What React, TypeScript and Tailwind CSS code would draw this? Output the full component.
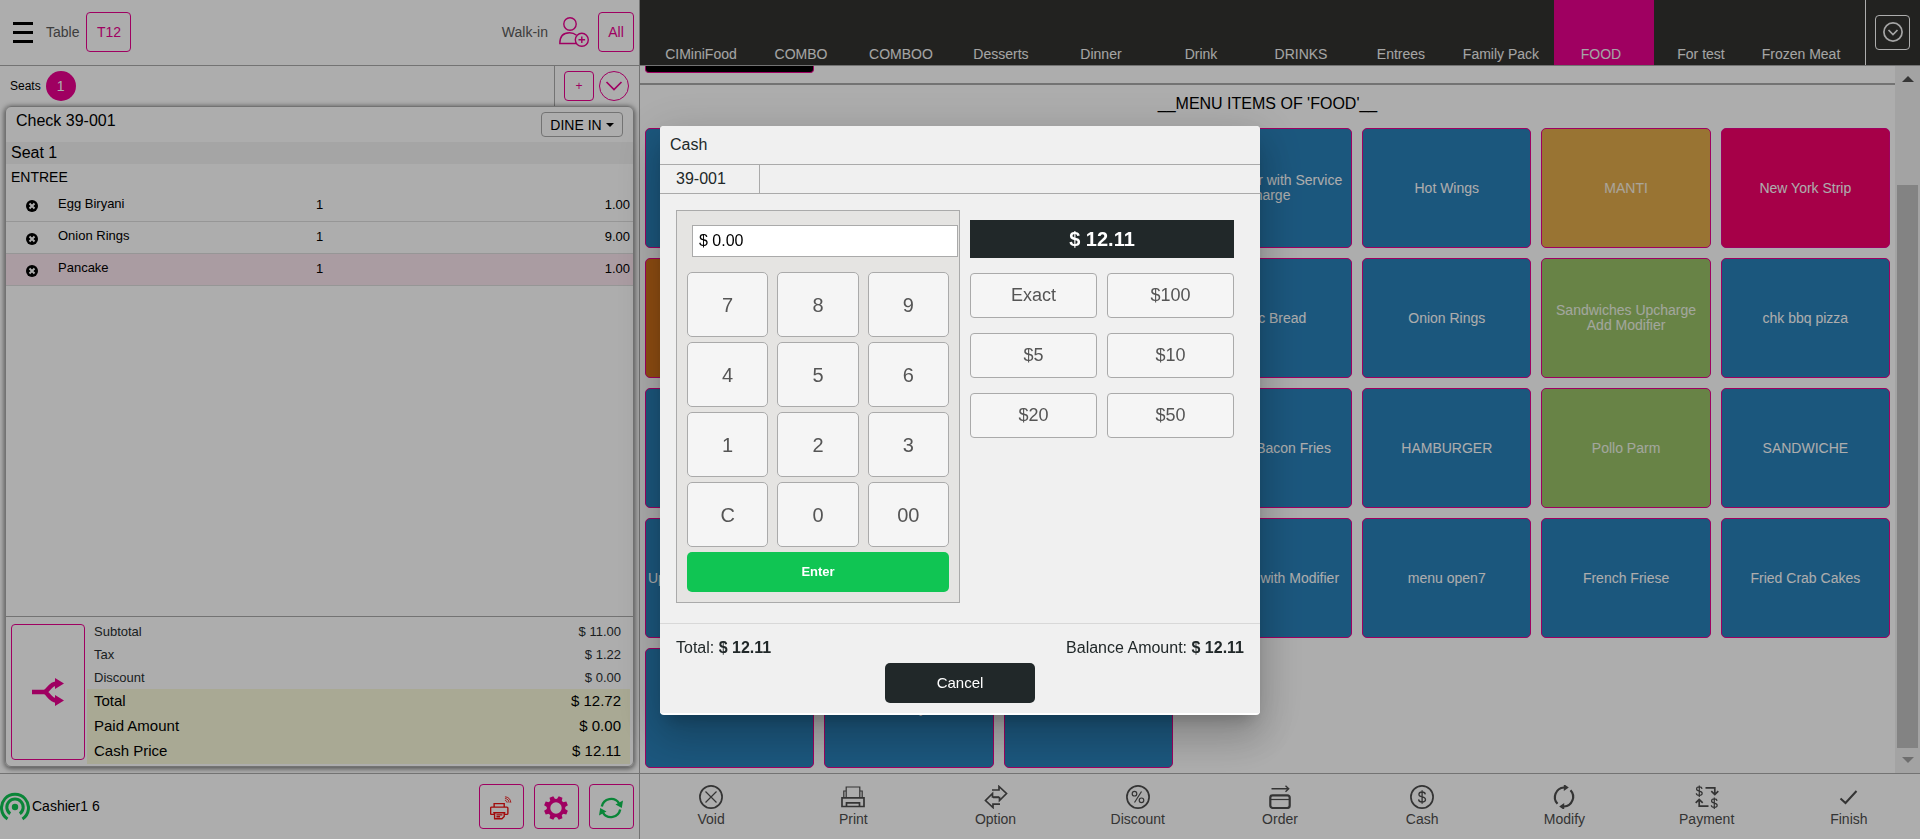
import React from 'react';

type Tile = { label: string; tone: keyof typeof tones };

const tones = {
  blue: 'bg-[#2980b9] text-white',
  amber: 'bg-[#e2ac4c] text-white/85',
  crimson: 'bg-[#f5006a] text-white',
  green: 'bg-[#9ac168] text-white/85',
  orange: 'bg-[#d3721a] text-white',
};

const categories = [
  'CIMiniFood', 'COMBO', 'COMBOO', 'Desserts', 'Dinner', 'Drink',
  'DRINKS', 'Entrees', 'Family Pack', 'FOOD', 'For test', 'Frozen Meat',
];

const tiles: Tile[] = [
  { label: '', tone: 'blue' },
  { label: '', tone: 'blue' },
  { label: '', tone: 'blue' },
  { label: 'Hamburger with Service Charge', tone: 'blue' },
  { label: 'Hot Wings', tone: 'blue' },
  { label: 'MANTI', tone: 'amber' },
  { label: 'New York Strip', tone: 'crimson' },
  { label: '', tone: 'orange' },
  { label: '', tone: 'blue' },
  { label: '', tone: 'blue' },
  { label: 'Garlic Bread', tone: 'blue' },
  { label: 'Onion Rings', tone: 'blue' },
  { label: 'Sandwiches Upcharge Add Modifier', tone: 'green' },
  { label: 'chk bbq pizza', tone: 'blue' },
  { label: '', tone: 'blue' },
  { label: '', tone: 'blue' },
  { label: '', tone: 'blue' },
  { label: 'Cheese Bacon Fries', tone: 'blue' },
  { label: 'HAMBURGER', tone: 'blue' },
  { label: 'Pollo Parm', tone: 'green' },
  { label: 'SANDWICHE', tone: 'blue' },
  { label: 'Upcharge Modifier Combo', tone: 'blue' },
  { label: '', tone: 'blue' },
  { label: '', tone: 'blue' },
  { label: 'Sandwich with Modifier', tone: 'blue' },
  { label: 'menu open7', tone: 'blue' },
  { label: 'French Friese', tone: 'blue' },
  { label: 'Fried Crab Cakes', tone: 'blue' },
  { label: '', tone: 'blue' },
  { label: 'Curry', tone: 'blue' },
  { label: '', tone: 'blue' },
];

const orderLines = [
  { name: 'Egg Biryani', qty: '1', price: '1.00', active: false },
  { name: 'Onion Rings', qty: '1', price: '9.00', active: false },
  { name: 'Pancake', qty: '1', price: '1.00', active: true },
];

const minorTotals = [
  ['Subtotal', '$ 11.00'],
  ['Tax', '$ 1.22'],
  ['Discount', '$ 0.00'],
];

const majorTotals = [
  ['Total', '$ 12.72'],
  ['Paid Amount', '$ 0.00'],
  ['Cash Price', '$ 12.11'],
];

const keypad = ['7', '8', '9', '4', '5', '6', '1', '2', '3', 'C', '0', '00'];
const quickCash = ['Exact', '$100', '$5', '$10', '$20', '$50'];

const stroke = { fill: 'none', stroke: 'currentColor', strokeWidth: 1.7 } as const;

function CustomerAddIcon() {
  return (
    <svg width="30" height="30" viewBox="0 0 30 30" {...stroke} strokeWidth={1.4} aria-hidden>
      <circle cx="11" cy="7" r="6.2" />
      <path d="M17 26.500H.8C.8 19.500 4.500 15.800 10.500 15.800c3 0 5.200.9 7 2.400" />
      <circle cx="22.800" cy="22.800" r="6.500" />
      <path d="M22.800 19.500v6.600M19.500 22.800h6.600" />
    </svg>
  );
}

function SplitIcon() {
  return (
    <svg width="32" height="28" viewBox="0 0 32 28" aria-hidden>
      <path d="M0 14h12c4.500 0 5-8.500 13-8.500M12 14c4.500 0 5 8.500 13 8.500" fill="none" stroke="currentColor" strokeWidth="4.500" />
      <path d="M23 0 32 5.500 23 11zM23 17 32 22.500 23 28z" fill="currentColor" />
    </svg>
  );
}

function SignalIcon() {
  return (
    <svg width="30" height="30" viewBox="0 0 30 30" fill="none" stroke="currentColor" strokeWidth="3" aria-hidden>
      <path d="M7.500 28a13.500 13.500 0 1 1 15 0" />
      <path d="M10.200 22.800a8.200 8.200 0 1 1 9.600 0" />
      <circle cx="15" cy="16" r="3.200" fill="currentColor" stroke="none" />
    </svg>
  );
}

function WirelessPrinterIcon() {
  return (
    <svg width="22" height="24" viewBox="0 0 24 26" fill="none" stroke="currentColor" strokeWidth="1.500" aria-hidden>
      <path d="M4.500 12V8.200h11V12M4.500 20H1.800c-.7 0-1.100-.4-1.100-1.100v-5.800c0-.7.400-1.100 1.100-1.100h16.600c.7 0 1.100.4 1.100 1.100v5.800c0 .7-.4 1.100-1.100 1.100h-2.900" />
      <path d="M3.500 18.200h13.200M5 18.200v6.500h8l2.500-2.500v-4M7 20.500h6.500M7 22.500h4" />
      <path d="M16.300 4.800c1.400.1 2.300 1 2.400 2.400M16.300 2.700c2.600.1 4.400 1.900 4.500 4.500M16.300.8c3.700.1 6.300 2.700 6.400 6.400" strokeWidth="1" />
    </svg>
  );
}

function GearIcon() {
  return (
    <svg width="24" height="24" viewBox="0 0 24 24" aria-hidden>
      <circle cx="12" cy="12" r="7.500" fill="none" stroke="currentColor" strokeWidth="3.600" />
      {[22.5, 67.5, 112.5, 157.5, 202.5, 247.5, 292.5, 337.5].map((angle) => (
        <path key={angle} d="M9.200 4.500 10 0h4l.8 4.500z" fill="currentColor" transform={`rotate(${angle} 12 12)`} />
      ))}
    </svg>
  );
}

function RefreshIcon() {
  return (
    <svg width="24" height="24" viewBox="0 0 24 24" aria-hidden>
      <path d="M2.800 10.500A9.500 9.500 0 0 1 20 7.200M21.200 13.500A9.500 9.500 0 0 1 4 16.800" fill="none" stroke="currentColor" strokeWidth="2.400" />
      <path d="M24 4.500 22.800 12 16.500 8.500zM0 19.500 1.200 12 7.500 15.500z" fill="currentColor" />
    </svg>
  );
}

function Svg24({ children }: { children: React.ReactNode }) {
  return (
    <svg width="24" height="24" viewBox="0 0 24 24" {...stroke} aria-hidden>
      {children}
    </svg>
  );
}

const dollar = 'M15.300 9.300c-.2-1.500-1.400-2.300-3.200-2.300-1.900 0-3.200.9-3.200 2.400 0 3.400 6.600 1.600 6.600 5.100 0 1.600-1.400 2.500-3.400 2.500s-3.400-.9-3.500-2.600M12.100 5.200v13.600';

const actions: { label: string; icon: React.ReactNode }[] = [
  {
    label: 'Void',
    icon: <Svg24><circle cx="12" cy="12" r="11.100" /><path d="m6.500 6.500 11 11m0-11-11 11" strokeWidth="1.200" /></Svg24>,
  },
  {
    label: 'Print',
    icon: (
      <Svg24>
        <path d="M5.200 12.500V2h13.600v10.500" strokeWidth="1.200" />
        <path d="M5 6H2.800v6.500M19 6h2.200v6.500" strokeWidth="1.200" />
        <path d="M1 12.800h22v8.700H1zM5.500 21v-3.200h13V21" />
      </Svg24>
    ),
  },
  {
    label: 'Option',
    icon: (
      <Svg24>
        <path d="M8 5h7V1.500L22.500 8.500 15.500 15.500V12.500H9" />
        <path d="M16 19.200H9v3.300L1.500 15.500 8.500 8.500v3.500h6.500" />
      </Svg24>
    ),
  },
  {
    label: 'Discount',
    icon: (
      <Svg24>
        <circle cx="12" cy="12" r="11.100" />
        <g strokeWidth="1.200"><circle cx="8.500" cy="8.700" r="2.300" /><circle cx="15.500" cy="15.300" r="2.300" /><path d="m15.500 6.500-7 11" /></g>
      </Svg24>
    ),
  },
  {
    label: 'Order',
    icon: (
      <Svg24>
        <path d="M3.500 3.800h17M17.500.8l3.200 3-3.200 3" strokeWidth="1.400" />
        <rect x="2.300" y="10.300" width="19.400" height="12.700" rx="2.500" strokeWidth="2.200" />
        <path d="M2.500 14.500h19" strokeWidth="1.200" />
      </Svg24>
    ),
  },
  {
    label: 'Cash',
    icon: <Svg24><circle cx="12" cy="12" r="11.100" /><path d={dollar} strokeWidth="1.300" /></Svg24>,
  },
  {
    label: 'Modify',
    icon: (
      <Svg24>
        <path d="M5.500 18.800A9.700 9.700 0 0 1 12 2.500h1M18.500 5.200A9.700 9.700 0 0 1 12 21.500h-1" strokeWidth="2.200" />
        <path d="M11.800-1v7l5-3.500zM12.200 18v7l-5-3.500z" fill="currentColor" stroke="none" />
      </Svg24>
    ),
  },
  {
    label: 'Payment',
    icon: (
      <Svg24>
        <path d="M10.500 2.800h9.300v6.500M16.300 6.200l3.500 3.300 3.500-3.300M13.500 21.200H4.200v-6.500M.7 17.800l3.500-3.300 3.500 3.300" />
        <g strokeWidth="1.400">
          <path d={dollar} transform="translate(-6 -4) scale(.85)" />
          <path d={dollar} transform="translate(9 8) scale(.85)" />
        </g>
      </Svg24>
    ),
  },
  { label: 'Finish', icon: <Svg24><path d="m3.500 13.500 5 4.500L19.500 6" strokeWidth="2" /></Svg24> },
];

const outlineButton = 'flex items-center justify-center rounded border border-[#eb0090] text-[#eb0090]';

function OrderPanel() {
  return (
    <section className="flex w-1/3 flex-col border-r border-[#aaa]">
      <header className="flex h-[66px] shrink-0 items-center border-b border-[#aaa] pb-px pl-[13px] pr-[5px] text-sm text-[#5a5a5a]">
        <button aria-label="Menu" className="mr-[13px] flex w-5 flex-col gap-[6px]">
          <span className="h-[3px] w-full bg-black" />
          <span className="h-[3px] w-full bg-black" />
          <span className="h-[3px] w-full bg-black" />
        </button>
        <span>Table</span>
        <button className={`${outlineButton} ml-[7px] h-10 w-[45px]`}>T12</button>
        <span className="ml-auto">Walk-in</span>
        <button aria-label="Add customer" className="ml-[11px] text-[#eb0090]"><CustomerAddIcon /></button>
        <button className={`${outlineButton} ml-[9px] h-10 w-9`}>All</button>
      </header>

      <div className="flex h-10 shrink-0 items-center pl-[10px] text-xs">
        <span>Seats</span>
        <button className="ml-[5px] flex size-[30px] items-center justify-center rounded-full bg-[#eb0090] text-sm text-white">1</button>
        <div className="ml-auto flex h-full items-center gap-[5px] border-l border-[#aaa] pl-[9px] pr-[10px]">
          <button aria-label="Add seat" className={`${outlineButton} size-[30px]`}>+</button>
          <button aria-label="Show seats" className="flex size-[30px] items-center justify-center rounded-full border border-[#eb0090] text-[#eb0090]">
            <svg width="18" height="10" viewBox="0 0 18 10" {...stroke} aria-hidden><path d="m1.500 1 7.500 7.500L16.500 1" /></svg>
          </button>
        </div>
      </div>

      <div className="mx-[5px] mb-[6px] flex min-h-0 flex-1 flex-col overflow-hidden rounded-md border border-[#aaa] shadow-[0_1px_5px_1px_rgba(0,0,0,0.5)]">
        <div className="flex h-[35px] shrink-0 items-start justify-between pl-[10px] pr-[10px] pt-[5px]">
          <h1 className="text-base leading-[18px]">Check 39-001</h1>
          <button className="flex h-[25px] w-[82px] items-center justify-center gap-1 rounded border border-[#aaa] text-sm">
            DINE IN
            <svg width="8" height="4" viewBox="0 0 8 4" aria-hidden><path d="M0 0h8L4 4z" /></svg>
          </button>
        </div>
        <div className="h-[22px] shrink-0 bg-[#f3f3f3] pl-[5px] text-base leading-[21px]">Seat 1</div>
        <div className="h-[25px] shrink-0 pl-[5px] text-sm leading-[26px]">ENTREE</div>
        <table className="w-full table-fixed text-[13px]">
          <tbody>
            {orderLines.map((line) => (
              <tr key={line.name} className={line.active ? 'h-8 border-b border-[#ddd] bg-[#fbe6ef]' : 'h-8 border-b border-[#ddd]'}>
                <td className="w-[52px] pl-5 pt-[3px]">
                  <button aria-label={`Remove ${line.name}`} className="block">
                    <svg width="12" height="12" viewBox="0 0 12 12" aria-hidden>
                      <circle cx="6" cy="6" r="6" />
                      <path d="m3.500 3.500 5 5m0-5-5 5" stroke="white" strokeWidth="2" />
                    </svg>
                  </button>
                </td>
                <td className="pb-[3px]">{line.name}</td>
                <td className="w-[200px] pb-px">{line.qty}</td>
                <td className="w-[117px] pb-px pr-[3px] text-right">{line.price}</td>
              </tr>
            ))}
          </tbody>
        </table>

        <div className="mt-auto flex gap-[2px] border-t border-[#aaa] pb-[2px] pl-[5px] pr-[3px]">
          <button aria-label="Split check" className={`${outlineButton} mb-1 mt-[7px] w-[74px]`}><SplitIcon /></button>
          <dl className="flex-1 pt-[3px]">
            {minorTotals.map(([label, value]) => (
              <div key={label} className="flex h-[23px] items-center justify-between pl-[7px] pr-[9px] text-[13px] text-[#2a2f31]">
                <dt>{label}</dt>
                <dd>{value}</dd>
              </div>
            ))}
            {majorTotals.map(([label, value]) => (
              <div key={label} className="flex h-[25px] items-center justify-between bg-[#f9fada] pl-[7px] pr-[9px] text-[15px]">
                <dt>{label}</dt>
                <dd>{value}</dd>
              </div>
            ))}
          </dl>
        </div>
      </div>

      <footer className="flex h-[66px] shrink-0 items-center border-t border-[#aaa] pb-px pr-[5px] text-sm">
        <span className="text-[#10c553]"><SignalIcon /></span>
        <span className="ml-[2px]">Cashier1 6</span>
        <div className="ml-auto flex gap-[10px]">
          <button aria-label="Printer status" className="flex size-[45px] items-center justify-center rounded border border-[#eb0090] pt-[3px] text-[#ee1111]"><WirelessPrinterIcon /></button>
          <button aria-label="Settings" className={`${outlineButton} size-[45px] pt-[3px]`}><GearIcon /></button>
          <button aria-label="Refresh" className="flex size-[45px] items-center justify-center rounded border border-[#eb0090] pt-[3px] text-[#10c553]"><RefreshIcon /></button>
        </div>
      </footer>
    </section>
  );
}

function MenuPanel() {
  return (
    <section className="flex min-w-0 flex-1 flex-col">
      <header className="flex h-[66px] shrink-0 border-b border-[#aaa] bg-[#333330] text-sm text-[#f3f3f3]">
        <nav className="flex min-w-0 flex-1 overflow-hidden pl-[14px]">
          {categories.map((category) => (
            <a
              key={category}
              href="#menu"
              className={
                category === 'FOOD'
                  ? 'flex w-[100px] shrink-0 items-end justify-center bg-[#eb0090] pb-[1px] pr-[6px]'
                  : 'flex w-[100px] shrink-0 items-end justify-center pb-[1px] pr-[6px]'
              }
            >
              {category}
            </a>
          ))}
        </nav>
        <div className="flex items-center border-l border-white pb-px pl-[9px] pr-[10px]">
          <button aria-label="More categories" className="flex size-[35px] items-center justify-center rounded border border-white">
            <svg width="20" height="20" viewBox="0 0 20 20" {...stroke} aria-hidden>
              <circle cx="10" cy="10" r="9.100" />
              <path d="m5.500 8 4.500 4.500L14.500 8" />
            </svg>
          </button>
        </div>
      </header>

      <div className="flex min-h-0 flex-1">
        <div id="menu" className="min-w-0 flex-1 overflow-hidden">
          <div className="mb-[10px] grid grid-cols-7 gap-x-[10px] px-[5px]">
            <div className="h-[7px] rounded-b border border-t-0 border-[#eb0090] bg-black" />
          </div>
          <h2 className="flex h-[45px] items-center justify-center border-t-2 border-[#aaa] pb-[6px] text-base">__MENU ITEMS OF 'FOOD'__</h2>
          <div className="grid auto-rows-[120px] grid-cols-7 gap-[10px] px-[5px]">
            {tiles.map((tile, index) => (
              <button
                key={index}
                className={`flex items-center justify-center rounded-[5px] border border-[#eb0090] px-px text-sm leading-[15px] ${tones[tile.tone]}`}
              >
                {tile.label}
              </button>
            ))}
          </div>
        </div>
        <div className="flex w-[25px] flex-col items-center bg-[#f1f1f1]" aria-hidden>
          <svg className="mt-[10px]" width="12" height="6" viewBox="0 0 12 6"><path d="M0 6h12L6 0z" fill="#505050" /></svg>
          <div className="mb-[9px] mt-[103px] w-[21px] flex-1 bg-[#c1c1c1]" />
          <svg className="mb-[10px]" width="12" height="6" viewBox="0 0 12 6"><path d="M0 0h12L6 6z" fill="#a3a3a3" /></svg>
        </div>
      </div>

      <footer className="grid h-[66px] shrink-0 grid-cols-9 border-t border-[#aaa] text-sm text-[#4d4d4d]">
        {actions.map((action) => (
          <button key={action.label} className="flex flex-col items-center pt-[11px]">
            {action.icon}
            <span className="leading-5">{action.label}</span>
          </button>
        ))}
      </footer>
    </section>
  );
}

function CashDialog() {
  return (
    <div className="fixed inset-0 flex items-center justify-center bg-black/32 pt-[2px]">
      <div
        role="dialog"
        aria-labelledby="cash-title"
        className="w-[600px] overflow-hidden rounded bg-white pb-[2px] text-[#212829] shadow-[0_11px_15px_-7px_rgba(0,0,0,0.2),0_24px_38px_3px_rgba(0,0,0,0.14),0_9px_46px_8px_rgba(0,0,0,0.12)]"
      >
        <div className="bg-[#f0f0f0]">
          <h2 id="cash-title" className="h-[39px] border-b border-[#aaa] pl-[10px] text-base leading-[37px]">Cash</h2>
          <div className="flex h-[29px] border-b border-[#aaa]">
            <button className="w-[100px] border-r border-[#aaa] pl-4 text-left text-base leading-[26px]">39-001</button>
          </div>

          <div className="flex items-start gap-[10px] px-4 pb-5 pt-4">
            <div className="flex w-[284px] flex-col border border-[#aaa] bg-[#e5e4e2] pb-[10px] pl-[10px] pr-[10px] pt-[14px]">
              <input
                aria-label="Amount tendered"
                defaultValue="$ 0.00"
                className="-mr-[9px] ml-[5px] h-8 border border-[#aaa] bg-white px-[6px] text-base text-black"
              />
              <div className="mt-[15px] grid grid-cols-3 gap-x-[9px] gap-y-[5px]">
                {keypad.map((key) => (
                  <button key={key} className="h-[65px] rounded-[5px] border border-[#aaa] bg-[#f5f5f5] text-xl text-[#555]">{key}</button>
                ))}
              </div>
              <button className="mt-[5px] h-10 rounded-[5px] bg-[#10c553] text-[13px] font-bold text-white">Enter</button>
            </div>

            <div className="w-[264px] pt-[10px]">
              <div className="mb-[15px] h-[38px] bg-[#212829] text-center text-xl font-bold leading-[38px] text-white">$ 12.11</div>
              <div className="grid grid-cols-2 gap-x-[10px] gap-y-[15px]">
                {quickCash.map((amount) => (
                  <button key={amount} className="h-[45px] rounded border border-[#aaa] bg-[#f5f5f5] pb-px text-lg text-[#555]">{amount}</button>
                ))}
              </div>
            </div>
          </div>

          <div className="flex flex-col border-t border-[#d8d8d8] pb-[10px] pt-3">
            <div className="flex justify-between px-4 text-base leading-6">
              <span>Total: <b>$ 12.11</b></span>
              <span>Balance Amount: <b>$ 12.11</b></span>
            </div>
            <button className="mt-[3px] h-10 w-[150px] self-center rounded-[5px] bg-[#212829] text-[15px] text-white">Cancel</button>
          </div>
        </div>
      </div>
    </div>
  );
}

export default function App() {
  return (
    <div className="flex h-screen overflow-hidden bg-white font-['Liberation_Sans',Arial,sans-serif] text-black">
      <OrderPanel />
      <MenuPanel />
      <CashDialog />
    </div>
  );
}
